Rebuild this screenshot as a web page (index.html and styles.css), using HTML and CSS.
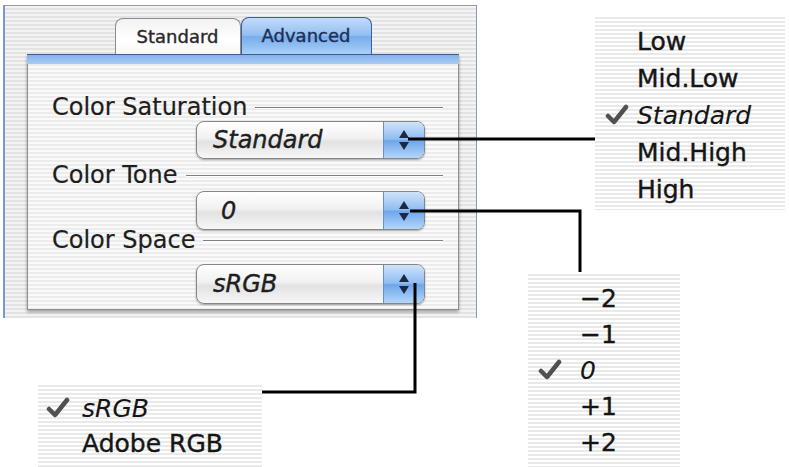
FILE: index.html
```html
<!DOCTYPE html>
<html lang="en">
<head>
    <meta charset="UTF-8">
    <title>Color settings - Advanced</title>
    <link rel="stylesheet" href="styles.css">
</head>
<body>
    <div class="figure">
        <!-- dialog window -->
        <div class="window">
            <div class="tabs">
                <div class="tab">Standard</div>
                <div class="tab active">Advanced</div>
            </div>

            <div class="panel">
                <div class="band"></div>
                <div class="panel-body">
                    <div class="group-label"><span>Color Saturation</span><i class="rule"></i></div>
                    <div class="popup popup-sat">
                        <span class="value">Standard</span>
                        <span class="stepper"><svg width="12" height="22" viewBox="0 0 12 22"><polygon points="1,9 6,1 11,9"/><polygon points="1,13 11,13 6,21"/></svg></span>
                    </div>

                    <div class="group-label tone"><span>Color Tone</span><i class="rule"></i></div>
                    <div class="popup popup-tone">
                        <span class="value">0</span>
                        <span class="stepper"><svg width="12" height="22" viewBox="0 0 12 22"><polygon points="1,9 6,1 11,9"/><polygon points="1,13 11,13 6,21"/></svg></span>
                    </div>

                    <div class="group-label space"><span>Color Space</span><i class="rule"></i></div>
                    <div class="popup popup-space">
                        <span class="value">sRGB</span>
                        <span class="stepper"><svg width="12" height="22" viewBox="0 0 12 22"><polygon points="1,9 6,1 11,9"/><polygon points="1,13 11,13 6,21"/></svg></span>
                    </div>
                </div>
            </div>
        </div>

        <!-- callout lines from each popup to its menu -->
        <svg class="callouts" width="789" height="467" viewBox="0 0 789 467">
            <polyline points="408,139 595,139"/>
            <polyline points="410,211 580,211 580,272"/>
            <polyline points="415,283 415,392 262,392"/>
        </svg>

        <!-- open menus -->
        <ul class="menu menu-sat">
            <li>Low</li>
            <li>Mid.Low</li>
            <li class="checked"><svg class="check" width="26" height="22" viewBox="0 0 26 22"><path d="M4 12 L10 18 L22 3"/></svg>Standard</li>
            <li>Mid.High</li>
            <li>High</li>
        </ul>

        <ul class="menu menu-tone">
            <li>&minus;2</li>
            <li>&minus;1</li>
            <li class="checked"><svg class="check" width="26" height="22" viewBox="0 0 26 22"><path d="M4 12 L10 18 L22 3"/></svg>0</li>
            <li>+1</li>
            <li>+2</li>
        </ul>

        <ul class="menu menu-space">
            <li class="checked"><svg class="check" width="26" height="22" viewBox="0 0 26 22"><path d="M4 12 L10 18 L22 3"/></svg>sRGB</li>
            <li>Adobe RGB</li>
        </ul>
    </div>
</body>
</html>
```

FILE: styles.css
```css
body {
    margin: 0;
    background-color: white;
    font-family: "DejaVu Sans", "Liberation Sans", sans-serif;
    color: #111;
}

.figure {
    position: relative;
    width: 789px;
    height: 467px;
    overflow: hidden;
}

/* window */
.window {
    box-sizing: border-box;
    width: 474px;
    height: 313px;
    margin: 5px 0 0 3px;
    border-top: 1px solid #9a9a9a;
    border-left: 2px solid #7b98d0;
    border-right: 1px solid #7b98d0;
    background: repeating-linear-gradient(to bottom, #f3f3f3 0, #f3f3f3 2px, #e3e3e3 2px, #e3e3e3 4px);
}

.tabs {
    display: flex;
    justify-content: center;
    align-items: flex-end;
    width: 432px;
    height: 48px;
    margin-left: 22px;
}

.tab {
    box-sizing: border-box;
    width: 126px;
    height: 36px;
    line-height: 36px;
    text-align: center;
    font-size: 18px;
    color: #2a2a2a;
    -webkit-text-stroke: 0.4px #2a2a2a;
    border: 1px solid #8c8c8c;
    border-bottom: none;
    border-radius: 8px 8px 0 0;
    background: linear-gradient(to bottom, #f2f2f2, #ffffff 60%, #f7f7f7);
}

.tab.active {
    width: 131px;
    height: 37px;
    color: #1d2f58;
    -webkit-text-stroke: 0.4px #1d2f58;
    border-color: #3d5d9c;
    background: linear-gradient(to bottom, #c3dbf8, #92bff1 48%, #78acec 52%, #a9d0f7);
}

.panel {
    box-sizing: border-box;
    width: 432px;
    height: 256px;
    margin-left: 22px;
    border: 1px solid #8e8e8e;
    border-top: none;
    background: repeating-linear-gradient(to bottom, #fafafa 0, #fafafa 2px, #ececec 2px, #ececec 4px);
    box-shadow: 0 2px 3px rgba(0, 0, 0, 0.35);
}

.band {
    height: 10px;
    margin: 0 -1px;
    border-top: 1px solid #3e5c98;
    box-sizing: border-box;
    background: linear-gradient(to bottom, #86b2ea, #a9cbf3);
}

.panel-body {
    padding: 31px 15px 0 24px;
}

.group-label {
    display: flex;
    align-items: center;
    height: 24px;
    line-height: 24px;
    font-size: 24px;
    color: #1e1e1e;
    -webkit-text-stroke: 0.2px #1e1e1e;
}

.group-label .rule {
    flex: 1;
    height: 1px;
    margin-left: 8px;
    background-color: #808080;
    box-shadow: 0 1px 0 #ffffff;
}

.group-label.tone {
    margin-top: 4px;
}

.group-label.space {
    margin-top: -2px;
}

/* popup buttons */
.popup {
    box-sizing: border-box;
    display: flex;
    align-items: center;
    width: 229px;
    height: 38px;
    margin: 2px 0 0 144px;
    border: 1px solid #868686;
    border-radius: 8px;
    background: linear-gradient(to bottom, #ffffff, #f1f1f1 45%, #e2e2e2 55%, #f7f7f7);
    box-shadow: 0 1px 2px rgba(0, 0, 0, 0.35);
}

.popup-tone {
    height: 39px;
    margin-top: 4px;
}

.popup-space {
    height: 40px;
    margin-top: 12px;
}

.popup .value {
    flex: 1;
    padding-left: 16px;
    font-size: 24px;
    font-style: italic;
    color: #1e1e1e;
    -webkit-text-stroke: 0.4px #1e1e1e;
}

.popup-tone .value {
    padding-left: 24px;
}

.stepper {
    display: flex;
    align-items: center;
    justify-content: center;
    width: 40px;
    height: 100%;
    border-left: 1px solid #6a90cc;
    border-radius: 0 7px 7px 0;
    background: linear-gradient(to bottom, #cfe3fb, #8fbcf1 48%, #6ea6eb 52%, #b2d6fb);
}

.stepper polygon {
    fill: #1b2944;
}

/* callout lines */
.callouts {
    position: absolute;
    left: 0;
    top: 0;
}

.callouts polyline {
    fill: none;
    stroke: #000;
    stroke-width: 3;
}

/* menus */
.menu {
    position: absolute;
    margin: 0;
    list-style: none;
    font-size: 25px;
    color: #151515;
    -webkit-text-stroke: 0.4px #151515;
    background: repeating-linear-gradient(to bottom, #ffffff 0, #ffffff 2px, #e9e9e9 2px, #e9e9e9 4px);
}

.menu li {
    position: relative;
    white-space: nowrap;
}

.menu .checked {
    font-style: italic;
    -webkit-text-stroke: 0.1px #151515;
}

.check {
    position: absolute;
    top: 50%;
    margin-top: -12px;
}

.check path {
    fill: none;
    stroke: #505050;
    stroke-width: 4.5;
    stroke-linecap: round;
    stroke-linejoin: round;
}

.menu-sat {
    left: 595px;
    top: 15px;
    width: 190px;
    height: 195px;
    box-sizing: border-box;
    padding: 8px 0 0 42px;
    line-height: 37px;
}

.menu-sat .check {
    left: -33px;
}

.menu-tone {
    left: 528px;
    top: 272px;
    width: 152px;
    height: 195px;
    box-sizing: border-box;
    padding: 9px 0 0 52px;
    line-height: 36px;
}

.menu-tone .check {
    left: -43px;
}

.menu-space {
    left: 38px;
    top: 383px;
    width: 224px;
    height: 84px;
    box-sizing: border-box;
    padding: 8px 0 0 44px;
    line-height: 35px;
}

.menu-space .check {
    left: -37px;
}
```
